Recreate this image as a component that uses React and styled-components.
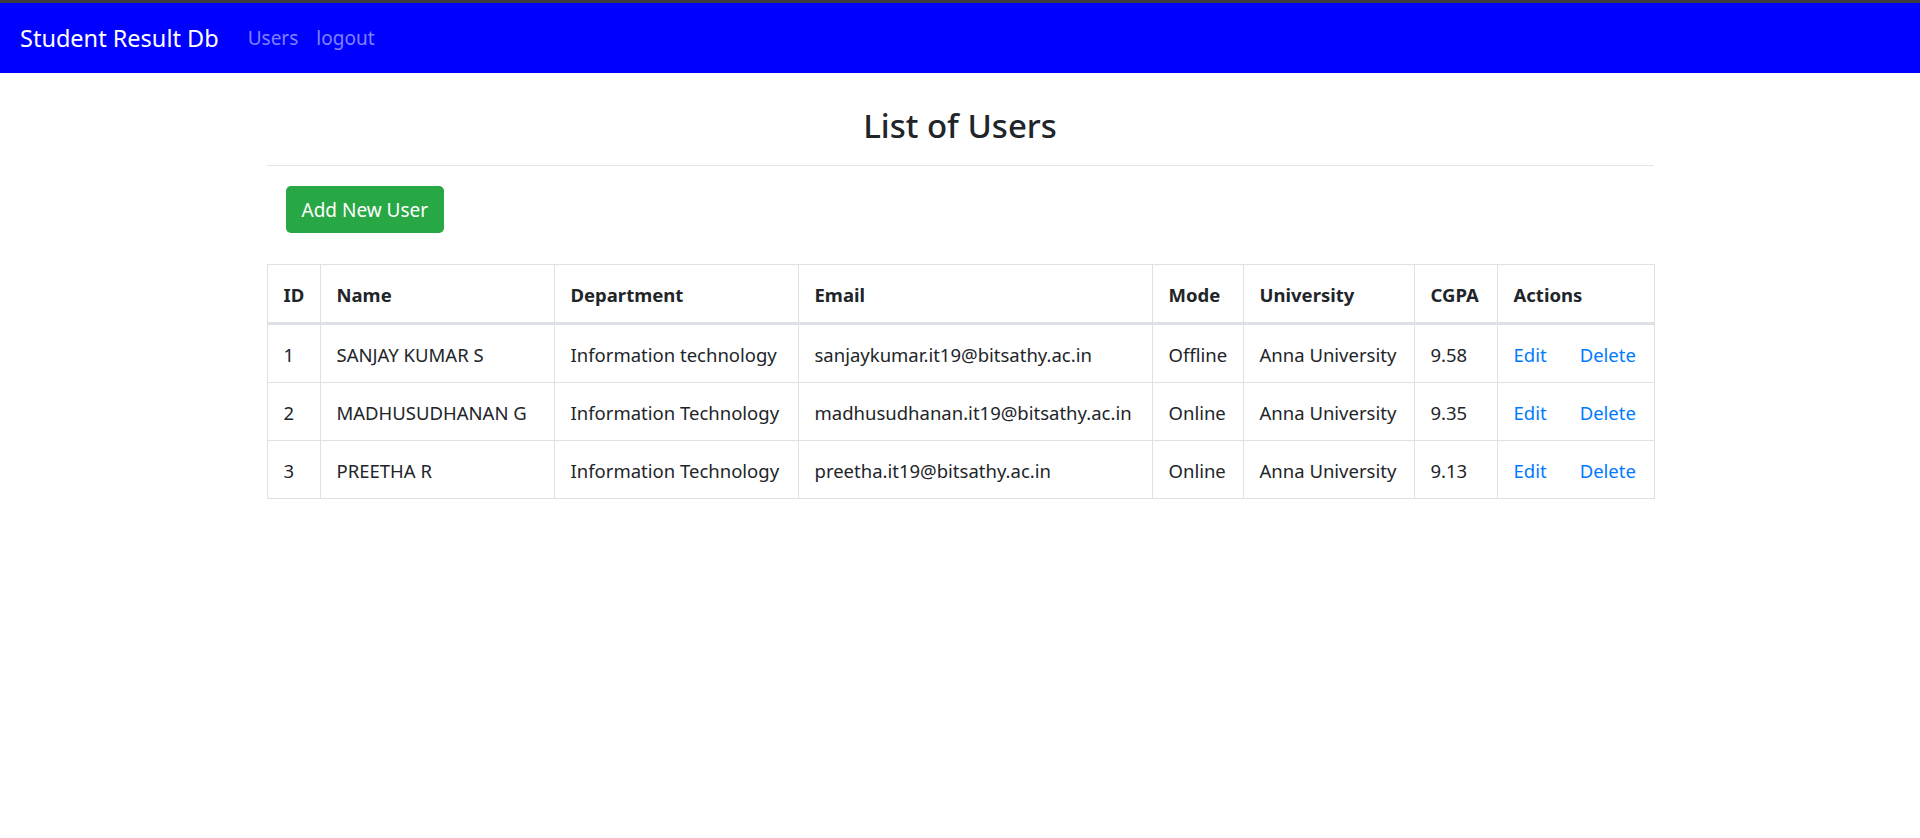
import React from "react";
import styled, { createGlobalStyle } from "styled-components";

const GlobalStyle = createGlobalStyle`
  body {
    margin: 0;
    background: #fff;
    font-family: "Noto Sans", "Open Sans", sans-serif;
    color: #212529;
  }
`;

const users = [
  {
    id: 1,
    name: "SANJAY KUMAR S",
    department: "Information technology",
    email: "sanjaykumar.it19@bitsathy.ac.in",
    mode: "Offline",
    university: "Anna University",
    cgpa: "9.58",
  },
  {
    id: 2,
    name: "MADHUSUDHANAN G",
    department: "Information Technology",
    email: "madhusudhanan.it19@bitsathy.ac.in",
    mode: "Online",
    university: "Anna University",
    cgpa: "9.35",
  },
  {
    id: 3,
    name: "PREETHA R",
    department: "Information Technology",
    email: "preetha.it19@bitsathy.ac.in",
    mode: "Online",
    university: "Anna University",
    cgpa: "9.13",
  },
];

const columns = [
  { label: "ID", width: 53 },
  { label: "Name", width: 234 },
  { label: "Department", width: 244 },
  { label: "Email", width: 354 },
  { label: "Mode", width: 91 },
  { label: "University", width: 171 },
  { label: "CGPA", width: 83 },
  { label: "Actions", width: 157 },
];

const App = () => {
  return (
    <React.Fragment>
      <GlobalStyle />
      <Navbar>
        <Brand href="#">Student Result Db</Brand>
        <NavLink href="#">Users</NavLink>
        <NavLink href="#">logout</NavLink>
      </Navbar>
      <Container>
        <Title>List of Users</Title>
        <Divider />
        <AddButton>Add New User</AddButton>
        <Table>
          <colgroup>
            {columns.map((c) => (
              <Col key={c.label} $width={c.width} />
            ))}
          </colgroup>
          <thead>
            <tr>
              {columns.map((c) => (
                <Th key={c.label}>{c.label}</Th>
              ))}
            </tr>
          </thead>
          <tbody>
            {users.map((u) => (
              <tr key={u.id}>
                <Td>{u.id}</Td>
                <Td>{u.name}</Td>
                <Td>{u.department}</Td>
                <Td>{u.email}</Td>
                <Td>{u.mode}</Td>
                <Td>{u.university}</Td>
                <Td>{u.cgpa}</Td>
                <Td>
                  <ActionLink href="#" $gap>
                    Edit
                  </ActionLink>
                  <ActionLink href="#">Delete</ActionLink>
                </Td>
              </tr>
            ))}
          </tbody>
        </Table>
      </Container>
    </React.Fragment>
  );
};

export default App;

const Navbar = styled.nav`
  display: flex;
  align-items: center;
  height: 70px;
  padding: 0 20px;
  background: #0000ff;
  border-top: 3px solid #3d3d3d;
`;

const Brand = styled.a`
  font-size: 23.5px;
  line-height: 30px;
  color: #fff;
  text-decoration: none;
  margin-right: 29px;
`;

const NavLink = styled.a`
  font-size: 19px;
  line-height: 27px;
  color: rgba(255, 255, 255, 0.5);
  text-decoration: none;
  margin-right: 18px;
`;

const Container = styled.main`
  width: 1387px;
  margin: 0 auto;
  padding-top: 33px;
`;

const Title = styled.h2`
  margin: 0;
  text-align: center;
  font-size: 33px;
  font-weight: 500;
  line-height: 40px;
`;

const Divider = styled.hr`
  margin: 19px 0 0;
  border: 0;
  border-top: 1px solid rgba(0, 0, 0, 0.1);
`;

const AddButton = styled.button`
  display: block;
  margin: 20px 0 0 19px;
  height: 47px;
  padding: 0 16px;
  border: 0;
  border-radius: 5px;
  background: #28a745;
  color: #fff;
  font-family: inherit;
  font-size: 19px;
`;

const Table = styled.table`
  width: 1387px;
  margin-top: 31px;
  border-collapse: collapse;
  table-layout: fixed;
  font-size: 18.5px;
`;

const Col = styled.col`
  width: ${(p) => p.$width}px;
`;

const Th = styled.th`
  text-align: left;
  font-weight: 700;
  padding: 16px 16px 14px;
  line-height: 27px;
  border: 1px solid #dee2e6;
  border-bottom: 3px solid #dee2e6;
  white-space: nowrap;
`;

const Td = styled.td`
  padding: 16px 16px 14px;
  line-height: 27px;
  border: 1px solid #dee2e6;
  white-space: nowrap;
`;

const ActionLink = styled.a`
  color: #007bff;
  text-decoration: none;
  margin-right: ${(p) => (p.$gap ? "33px" : "0")};
`;
